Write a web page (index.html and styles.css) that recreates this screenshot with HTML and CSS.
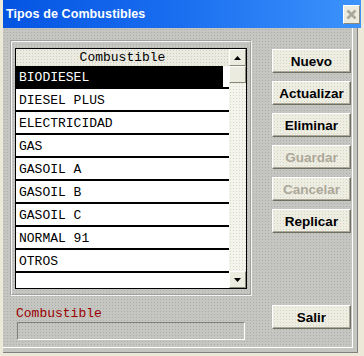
FILE: index.html
```html
<!DOCTYPE html>
<html lang="es">
<head>
<meta charset="utf-8">
<link rel="stylesheet" href="styles.css">
</head>
<body>
<div class="win">
	<div class="titlebar">
		<span class="title">Tipos de Combustibles</span>
		<span class="close">
			<svg width="11" height="11" viewBox="0 0 11 11"><path d="M1.5 1.5 L9.5 9.5 M9.5 1.5 L1.5 9.5" stroke="#a9a899" stroke-width="2.6"/></svg>
		</span>
	</div>
	<div class="client">
		<div class="left">
			<div class="group">
				<div class="list">
					<div class="cols">
						<div class="head">Combustible</div>
						<div class="row sel">BIODIESEL</div>
						<div class="row">DIESEL PLUS</div>
						<div class="row">ELECTRICIDAD</div>
						<div class="row">GAS</div>
						<div class="row">GASOIL A</div>
						<div class="row">GASOIL B</div>
						<div class="row">GASOIL C</div>
						<div class="row">NORMAL 91</div>
						<div class="row">OTROS</div>
					</div>
					<div class="sbar">
						<div class="sbtn"><svg width="7" height="4" viewBox="0 0 7 4"><path d="M0 4 L3.5 0 L7 4 Z" fill="#000"/></svg></div>
						<div class="thumb"></div>
						<div class="track"></div>
						<div class="sbtn"><svg width="7" height="4" viewBox="0 0 7 4"><path d="M0 0 L7 0 L3.5 4 Z" fill="#000"/></svg></div>
					</div>
				</div>
			</div>
			<div class="field">
				<div class="lbl">Combustible</div>
				<div class="input"></div>
			</div>
		</div>
		<div class="buttons">
			<button class="btn">Nuevo</button>
			<button class="btn">Actualizar</button>
			<button class="btn">Eliminar</button>
			<button class="btn off">Guardar</button>
			<button class="btn off">Cancelar</button>
			<button class="btn">Replicar</button>
			<button class="btn exit">Salir</button>
		</div>
	</div>
</div>
</body>
</html>
```

FILE: styles.css
```css
body { margin:0; font-family:"Liberation Sans", Arial, sans-serif; }

.win { width:364px; height:356px; box-sizing:border-box; background:#ece9d8; border-left:3px solid #ece9d8; border-right:3px solid #ece9d8; border-bottom:3px solid #ece9d8; display:flex; flex-direction:column; }

.titlebar { height:28px; flex:none; display:flex; align-items:center; justify-content:space-between; background:linear-gradient(to right, #0454e2, #1a6ff0 50%, #3d93fb); padding:0 1px 0 3px; }
.title { color:#fff; font-weight:bold; font-size:12.5px; letter-spacing:0.1px; }
.close { width:17px; height:19px; box-sizing:border-box; background:#ecebe0; border:1px solid #fff; border-right-color:#8a8878; border-bottom-color:#8a8878; display:flex; align-items:center; justify-content:center; margin-top:1px; }

.client { flex:1; display:flex; margin-right:3px; padding:12px 0 0 7px; background-color:#c5c5c1; background-image:radial-gradient(circle, #aeaea9 0.6px, transparent 1px); background-size:3px 3px; border-right:1px solid #808080; border-bottom:1px solid #808080; box-shadow:inset -4px -4px 0 0 #c5c5c1, inset -5px -5px 0 0 #fff; }

.group { width:242px; height:256px; box-sizing:border-box; border:2px groove #f4f4f4; padding:6px 0 0 3px; }
.list { width:232px; height:241px; box-sizing:border-box; border:1px solid #000; display:flex; background:#fff; }
.cols { width:213px; font-family:"Liberation Mono", "Courier New", monospace; font-size:13px; }
.head { height:17px; line-height:18px; text-align:center; background-color:#ecebe2; background-image:radial-gradient(circle, #cfcdc0 0.6px, transparent 1px); background-size:3px 3px; }
.row { height:19px; padding-top:2px; line-height:19px; border-bottom:2px solid #000; padding-left:3px; }
.row.sel { color:#fff; background:linear-gradient(#000, #000) no-repeat 0 0 / 207px 100%; }

.sbar { width:17px; display:flex; flex-direction:column; background-color:#f4f3ec; background-image:radial-gradient(circle, #d8d6c8 0.6px, transparent 1px); background-size:3px 3px; }
.sbtn, .thumb { height:17px; box-sizing:border-box; background:#ecebe0; border:1px solid #fff; border-right-color:#8a8878; border-bottom-color:#8a8878; display:flex; align-items:center; justify-content:center; }
.track { flex:1; }

.field { padding:10px 0 0 6px; }
.lbl { font-family:"Liberation Mono", "Courier New", monospace; font-size:13px; line-height:15px; color:#9a0000; }
.input { width:228px; height:18px; box-sizing:border-box; margin:1px 0 0 1px; border:1px solid #808080; border-right-color:#fff; border-bottom-color:#fff; }

.buttons { display:flex; flex-direction:column; gap:8px; padding:9px 0 0 20px; }
.btn { width:79px; height:24px; padding:0; font-family:"Liberation Sans", Arial, sans-serif; font-weight:bold; font-size:13.5px; color:#000; background-color:#eeede2; background-image:radial-gradient(circle, #d6d4c6 0.6px, transparent 1px); background-size:3px 3px; border:1px solid #fff; border-right-color:#716f64; border-bottom-color:#716f64; box-shadow:inset -1px -1px #aca899; }
.btn.off { color:#aca899; }
.btn.exit { margin-top:64px; }
```
